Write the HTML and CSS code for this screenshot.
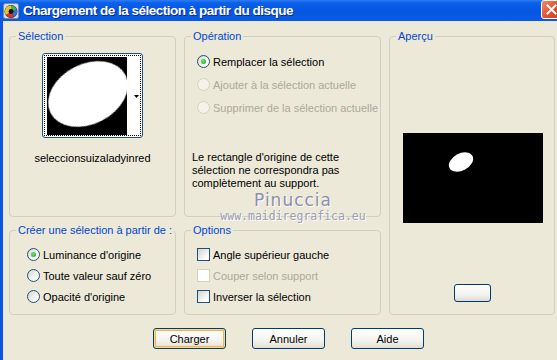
FILE: index.html
```html
<!DOCTYPE html>
<html lang="fr">
<head>
<meta charset="UTF-8">
<title>Chargement de la sélection à partir du disque</title>
<link rel="stylesheet" href="styles.css">
</head>
<body>
<div class="window">
  <div class="titlebar">
    <svg class="app-icon" width="16" height="16" viewBox="0 0 16 16">
      <rect x="0.5" y="0.5" width="15" height="15" rx="2" fill="#d9dde6" stroke="#7f8aa3"/>
      <circle cx="8" cy="8.5" r="6.5" fill="#2a2a2a"/>
      <path d="M8 8.5 L8 2.5 A6 6 0 0 1 13.6 6.5 Z" fill="#3fb34f"/>
      <path d="M8 8.5 L13.6 6.5 A6 6 0 0 1 11 13.7 Z" fill="#2f6fe0"/>
      <path d="M8 8.5 L11 13.7 A6 6 0 0 1 3 12 Z" fill="#d8342c"/>
      <path d="M8 8.5 L3 12 A6 6 0 0 1 8 2.5 Z" fill="#e8c22a"/>
      <circle cx="8" cy="8.5" r="2.4" fill="#111"/>
    </svg>
    <span class="title">Chargement de la sélection à partir du disque</span>
    <span class="close">
      <svg width="11" height="11" viewBox="0 0 11 11"><path d="M1.5 1.5 L9.5 9.5 M9.5 1.5 L1.5 9.5" stroke="#fff" stroke-width="2" stroke-linecap="square"/></svg>
    </span>
  </div>

  <div class="client">
    <div class="groups">
      <fieldset class="group">
        <legend>Sélection</legend>
        <div class="sel-body">
          <div class="thumb">
            <div class="focus">
              <svg class="thumb-img" width="80" height="78" viewBox="0 0 80 78">
                <defs><filter id="soft"><feGaussianBlur stdDeviation="0.7"/></filter></defs>
                <rect width="80" height="78" fill="#000"/>
                <ellipse cx="41" cy="37" rx="42" ry="30" transform="rotate(-27 41 37)" fill="#fff" filter="url(#soft)"/>
              </svg>
              <svg class="drop" width="5" height="3" viewBox="0 0 5 3"><path d="M0 0 H5 L2.5 3 Z" fill="#000"/></svg>
            </div>
          </div>
          <div class="sel-name">seleccionsuizaladyinred</div>
        </div>
      </fieldset>

      <fieldset class="group">
        <legend>Opération</legend>
        <div class="op-body">
          <div class="row"><span class="radio on"></span>Remplacer la sélection</div>
          <div class="row off"><span class="radio"></span>Ajouter à la sélection actuelle</div>
          <div class="row off"><span class="radio"></span>Supprimer de la sélection actuelle</div>
          <p class="note">Le rectangle d'origine de cette<br>sélection ne correspondra pas<br>complètement au support.</p>
        </div>
      </fieldset>

      <fieldset class="group preview">
        <legend>Aperçu</legend>
        <div class="pv-body">
          <svg class="pv" width="140" height="90" viewBox="0 0 140 90">
            <rect width="140" height="90" fill="#000"/>
            <ellipse cx="58" cy="29" rx="13" ry="8.5" transform="rotate(-28 58 29)" fill="#fff"/>
          </svg>
          <button class="mini"></button>
        </div>
      </fieldset>

      <fieldset class="group">
        <legend>Créer une sélection à partir de :</legend>
        <div class="list create">
          <div class="row"><span class="radio on"></span>Luminance d'origine</div>
          <div class="row"><span class="radio"></span>Toute valeur sauf zéro</div>
          <div class="row"><span class="radio"></span>Opacité d'origine</div>
        </div>
      </fieldset>

      <fieldset class="group">
        <legend>Options</legend>
        <div class="list options">
          <div class="row"><span class="check"></span>Angle supérieur gauche</div>
          <div class="row off"><span class="check"></span>Couper selon support</div>
          <div class="row"><span class="check"></span>Inverser la sélection</div>
        </div>
      </fieldset>
    </div>

    <div class="actions">
      <button class="btn default">Charger</button>
      <button class="btn">Annuler</button>
      <button class="btn">Aide</button>
    </div>

    <div class="mark">
      <div class="mark-name">Pinuccia</div>
      <div class="mark-url">www.maidiregrafica.eu</div>
    </div>
  </div>
</div>
</body>
</html>
```

FILE: styles.css
```css
body {margin:0;background:#ece9d8;font-family:'Liberation Sans', Arial, sans-serif;font-size:11px;color:#000;overflow:hidden;}
.window {width:557px;height:360px;overflow:hidden;display:flex;flex-direction:column;}

/* title bar */
.titlebar {height:21px;flex:none;display:flex;align-items:center;background:linear-gradient(to bottom,#2c7df4 0,#0b5fe9 3px,#0556e3 55%,#0a5ae6 100%);padding-left:3px;}
.app-icon {flex:none;margin-right:4px;}
.title {flex:1;color:#fff;font-weight:bold;font-size:13.5px;letter-spacing:-0.5px;text-shadow:1px 1px 0 #0a2b8a;white-space:nowrap;}
.close {flex:none;width:21px;height:19px;margin-right:-5px;margin-top:-3px;box-sizing:border-box;border:1px solid #fff;border-radius:3px;background:linear-gradient(135deg,#f08a6c,#e0502b 55%,#c8401f);display:flex;align-items:center;justify-content:center;}

/* client area */
.client {flex:1;position:relative;border-left:3px solid #0a55e6;padding:8px 0 0 6px;}
.groups {display:grid;grid-template-columns:167px 197px 166px;grid-template-rows:188px 92px;column-gap:8px;row-gap:6px;}
.group {margin:0;padding:0;min-width:0;border:1px solid #d0d0bf;border-radius:4px;}
.group legend {margin-left:6px;padding:0 2px;line-height:14px;color:#0046d5;}
.preview {grid-column:3;grid-row:1 / span 2;}

/* selection thumbnail */
.sel-body {display:flex;flex-direction:column;align-items:center;padding-top:10px;}
.thumb {width:101px;height:85px;box-sizing:border-box;border:1px solid #1c5180;border-radius:3px;padding:1px;background:#fff;}
.focus {height:100%;box-sizing:border-box;border:1px dotted #000;display:flex;align-items:center;padding:1px 0 0 2px;}
.thumb-img {display:block;align-self:flex-start;}
.drop {margin-left:auto;margin-right:1px;}
.sel-name {margin-top:13px;line-height:14px;}

/* radio / checkbox rows */
.row {display:flex;align-items:center;gap:3px;height:23px;}
.row.off {color:#aca899;}
.radio {width:13px;height:13px;flex:none;box-sizing:border-box;border:1px solid #1c5180;border-radius:50%;background:linear-gradient(135deg,#d6d4ca,#fff 80%);position:relative;}
.radio.on::after {content:'';position:absolute;left:3px;top:3px;width:5px;height:5px;border-radius:50%;background:radial-gradient(circle at 40% 40%,#6ee06a,#21a121);}
.row.off .radio {border-color:#d4d1c3;background:#f4f2ea;}
.check {width:13px;height:13px;flex:none;box-sizing:border-box;border:1px solid #1c5180;background:linear-gradient(135deg,#d6d4ca,#fff 80%);}
.row.off .check {border-color:#d4d1c3;background:#fff;}

.op-body {padding:7px 0 0 12px;}
.note {margin:32px 0 0 -5px;line-height:13px;}

.list {padding-top:7px;}
.list .row {height:21px;}
.create {padding-left:17px;}
.options {padding-left:12px;}

/* preview */
.pv-body {display:flex;flex-direction:column;align-items:center;padding-top:90px;padding-left:1px;}
.pv {display:block;}
.mini {width:37px;height:18px;margin-top:61px;padding:0;border:1px solid #003c74;border-radius:3px;background:linear-gradient(to bottom,#fff,#f0efea 70%,#dedad0);}

/* buttons */
.actions {display:flex;gap:26px;padding:13px 0 0 144px;}
.btn {width:73px;height:21px;padding:0;border:1px solid #003c74;border-radius:3px;background:linear-gradient(to bottom,#fff,#f4f3ee 60%,#e3dfd4);font-family:'Liberation Sans', Arial, sans-serif;font-size:11px;color:#000;}
.btn.default {box-shadow:inset 0 0 0 1px #fbd98b,inset 0 0 0 2px #f0b450;}

/* watermark */
.mark {position:absolute;left:210px;top:170px;width:160px;text-align:center;color:#8e8eac;text-shadow:1px 1px 0 #fff;}
.mark-name {font-family:'DejaVu Sans', sans-serif;font-size:17px;letter-spacing:1px;line-height:19px;}
.mark-url {font-family:'DejaVu Sans Mono', monospace;font-size:11.5px;line-height:13px;color:#9c9cb6;}
```
